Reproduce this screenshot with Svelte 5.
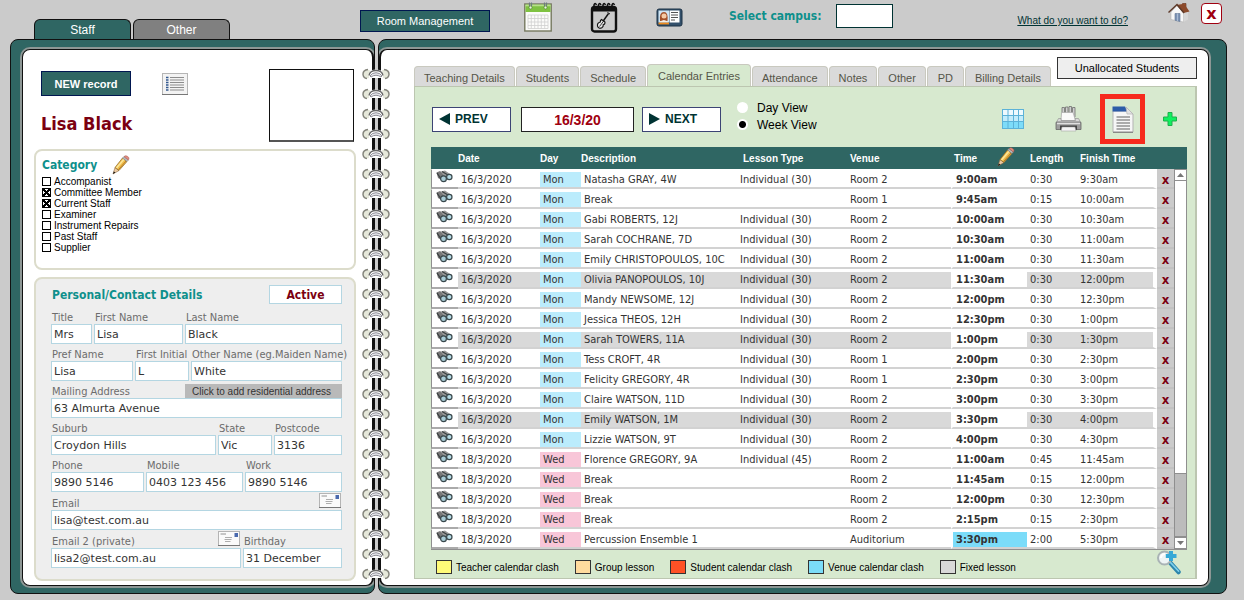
<script lang="ts">
    let view = 'week';
    let campus = '';

    let categories = [
        { name: 'Accompanist', on: false },
        { name: 'Committee Member', on: true },
        { name: 'Current Staff', on: true },
        { name: 'Examiner', on: false },
        { name: 'Instrument Repairs', on: false },
        { name: 'Past Staff', on: false },
        { name: 'Supplier', on: false }
    ];

    // size = share of the row each field takes
    let rows = [
        [{ label: 'Title', value: 'Mrs', size: 41 }, { label: 'First Name', value: 'Lisa', size: 89 }, { label: 'Last Name', value: 'Black', size: 157 }],
        [{ label: 'Pref Name', value: 'Lisa', size: 82 }, { label: 'First Initial', value: 'L', size: 54 }, { label: 'Other Name (eg.Maiden Name)', value: 'White', size: 151 }],
        [{ label: 'Mailing Address', value: '63 Almurta Avenue', size: 1, residential: true }],
        [{ label: 'Suburb', value: 'Croydon Hills', size: 165 }, { label: 'State', value: 'Vic', size: 54 }, { label: 'Postcode', value: '3136', size: 68 }],
        [{ label: 'Phone', value: '9890 5146', size: 93 }, { label: 'Mobile', value: '0403 123 456', size: 97 }, { label: 'Work', value: '9890 5146', size: 97 }],
        [{ label: 'Email', value: 'lisa@test.com.au', size: 1, mail: true }],
        [{ label: 'Email 2 (private)', value: 'lisa2@test.com.au', size: 190, mail: true }, { label: 'Birthday', value: '31 December', size: 99 }]
    ];

    let tabs = ['Teaching Details', 'Students', 'Schedule', 'Calendar Entries', 'Attendance', 'Notes', 'Other', 'PD', 'Billing Details'];
    let activeTab = 'Calendar Entries';

    const mon = '16/3/2020', wed = '18/3/2020';
    let entries = [
        [mon, 'Natasha GRAY, 4W', 'Individual (30)', 'Room 2', '9:00am', '0:30', '9:30am'],
        [mon, 'Break', '', 'Room 1', '9:45am', '0:15', '10:00am'],
        [mon, 'Gabi ROBERTS, 12J', 'Individual (30)', 'Room 2', '10:00am', '0:30', '10:30am'],
        [mon, 'Sarah COCHRANE, 7D', 'Individual (30)', 'Room 2', '10:30am', '0:30', '11:00am'],
        [mon, 'Emily CHRISTOPOULOS, 10C', 'Individual (30)', 'Room 2', '11:00am', '0:30', '11:30am'],
        [mon, 'Olivia PANOPOULOS, 10J', 'Individual (30)', 'Room 2', '11:30am', '0:30', '12:00pm', 'fixed'],
        [mon, 'Mandy NEWSOME, 12J', 'Individual (30)', 'Room 2', '12:00pm', '0:30', '12:30pm'],
        [mon, 'Jessica THEOS, 12H', 'Individual (30)', 'Room 2', '12:30pm', '0:30', '1:00pm'],
        [mon, 'Sarah TOWERS, 11A', 'Individual (30)', 'Room 2', '1:00pm', '0:30', '1:30pm', 'fixed'],
        [mon, 'Tess CROFT, 4R', 'Individual (30)', 'Room 1', '2:00pm', '0:30', '2:30pm'],
        [mon, 'Felicity GREGORY, 4R', 'Individual (30)', 'Room 1', '2:30pm', '0:30', '3:00pm'],
        [mon, 'Claire WATSON, 11D', 'Individual (30)', 'Room 2', '3:00pm', '0:30', '3:30pm'],
        [mon, 'Emily WATSON, 1M', 'Individual (30)', 'Room 2', '3:30pm', '0:30', '4:00pm', 'fixed'],
        [mon, 'Lizzie WATSON, 9T', 'Individual (30)', 'Room 2', '4:00pm', '0:30', '4:30pm'],
        [wed, 'Florence GREGORY, 9A', 'Individual (45)', 'Room 2', '11:00am', '0:45', '11:45am'],
        [wed, 'Break', '', 'Room 2', '11:45am', '0:15', '12:00pm'],
        [wed, 'Break', '', 'Room 2', '12:00pm', '0:30', '12:30pm'],
        [wed, 'Break', '', 'Room 2', '2:15pm', '0:15', '2:30pm'],
        [wed, 'Percussion Ensemble 1', '', 'Auditorium', '3:30pm', '2:00', '5:30pm', 'venue']
    ];

    let legend = [
        { name: 'Teacher calendar clash', color: '#fffb78' },
        { name: 'Group lesson', color: '#ffdb9e' },
        { name: 'Student calendar clash', color: '#ff5126' },
        { name: 'Venue calendar clash', color: '#7bdcf9' },
        { name: 'Fixed lesson', color: '#d9d9d9' }
    ];

    function removeEntry(entry) { entries = entries.filter(e => e !== entry); }
</script>

<svelte:head><title>Staff</title></svelte:head>

{#snippet pencil()}
    <svg width="18" height="20" viewBox="0 0 18 20" aria-hidden="true">
        <path d="M1 19 L3 12.500 L7 15.500 Z" fill="#ecc9a0" stroke="#8d6b44" stroke-width=".6" />
        <path d="M1 19 L1.800 16.400 L3.400 17.500 Z" fill="#111" />
        <path d="M3 12.500 L10.500 3 L15 6.500 L7 15.500 Z" fill="#f0bd4a" stroke="#8a6424" stroke-width=".7" />
        <path d="M4.500 13 L12 4.200" stroke="#fbe79c" stroke-width="1.500" />
        <path d="M6.400 14.800 L14 6" stroke="#b97e28" stroke-width="1" />
        <path d="M10.500 3 L12 1.600 L16.300 5 L15 6.500 Z" fill="#b9bdc2" stroke="#777" stroke-width=".5" />
        <path d="M12 1.600 Q13 .2 15 1 Q17.500 2.300 17 4 L16.300 5 Z" fill="#e3897d" stroke="#a35a50" stroke-width=".5" />
    </svg>
{/snippet}

<div class="app">
    <header>
        <nav class="main-tabs">
            <button class="current">Staff</button>
            <button>Other</button>
        </nav>
        <button class="dark room">Room Management</button>
        <div class="shortcuts">
            <button class="plain" aria-label="Calendar">
                <svg width="28" height="30" viewBox="0 0 28 30">
                    <rect x=".8" y="2" width="26.400" height="27" fill="#fcfcfa" stroke="#75785f" stroke-width="1.400" />
                    <rect x="1.500" y="2.500" width="25" height="7.500" fill="#7fc241" />
                    <path d="M1.500 3.500H26.500" stroke="#b7e08a" stroke-width="1.500" />
                    <path d="M4 13H24M4 16.500H24M4 20H24M4 23.500H24M4 26.500H24M4 13V26.500M7.300 13V26.500M10.700 13V26.500M14 13V26.500M17.300 13V26.500M20.700 13V26.500M24 13V26.500" stroke="#cfcfcf" stroke-width=".8" />
                    <path d="M5.500 .5V4.500M7.500 .5V4.500M20.500 .5V4.500M22.500 .5V4.500" stroke="#6e7c80" stroke-width="1.200" />
                    <circle cx="6.500" cy="5.500" r="1.500" fill="#e9f4e0" stroke="#4b7a2a" stroke-width=".6" />
                    <circle cx="21.500" cy="5.500" r="1.500" fill="#e9f4e0" stroke="#4b7a2a" stroke-width=".6" />
                </svg>
            </button>
            <button class="plain" aria-label="Instrument calendar">
                <svg width="28" height="31" viewBox="0 0 28 31">
                    <rect x="2" y="5" width="24" height="24.500" rx="2.500" fill="#cbcbcb" stroke="#111" stroke-width="2.400" />
                    <path d="M2 5H26V9.500H2Z" fill="#111" />
                    <path d="M4 7V3q1-3 2.500 0M8.500 7V3q1-3 2.500 0M13 7V3q1-3 2.500 0M17.500 7V3q1-3 2.500 0M22 7V3q1-3 2.500 0" fill="none" stroke="#111" stroke-width="1.600" />
                    <path d="M18.500 11.500 L12.500 20" stroke="#111" stroke-width="1.400" />
                    <path d="M17.500 10.500 l2.500 1.500" stroke="#111" />
                    <path d="M11.500 17.500 q-1.500 1 -1.200 2.500 q-3.300 .8 -2.800 4 q1 3.300 4.300 1.800 q1.800-1.200 1.400-3 q2-.5 1.800-2.800Z" fill="#e4e4e4" stroke="#111" stroke-width="1.100" />
                    <path d="M9.500 24.500 L14 18.500" stroke="#111" stroke-width=".8" />
                </svg>
            </button>
            <button class="plain" aria-label="Contacts">
                <svg width="27" height="19" viewBox="0 0 27 19">
                    <rect x="1" y="1" width="25" height="17" rx="2" fill="#33506b" stroke="#1d3247" />
                    <rect x="2.500" y="2.500" width="10.500" height="12" fill="#cfe6f5" />
                    <rect x="13.500" y="2.500" width="10" height="12" fill="#fff" />
                    <path d="M4 13 Q3 4 8 4 Q12.500 4 11.500 13Z" fill="#a4512a" />
                    <circle cx="8" cy="8" r="2.500" fill="#f5cba6" />
                    <path d="M3 14.500 Q8 9.500 12.500 14.500Z" fill="#f2efe9" />
                    <path d="M2.500 15.500H13" stroke="#f08b1d" stroke-width="1.800" />
                    <path d="M15 4.500H22M15 7H22M15 9.500H22M15 12H19" stroke="#555" />
                </svg>
            </button>
        </div>
        <label class="campus">Select campus:
            <select bind:value={campus}><option value=""></option></select>
        </label>
        <div class="right-tools">
            <a class="help" href="#help">What do you want to do?</a>
            <button class="plain" aria-label="Home">
                <svg width="22" height="21" viewBox="0 0 22 21">
                    <path d="M14.500 1.500h3.500v6h-3.500z" fill="#a4552f" stroke="#5e2d17" stroke-width=".6" />
                    <path d="M3 10 L9 3.500 L15.500 10 V20 L3 17.500Z" fill="#f7f7f7" stroke="#aaa" stroke-width=".5" />
                    <path d="M15.500 10 L20 9 V17.500 L15.500 20Z" fill="#d6d6d6" />
                    <path d="M8.500 3 L16 1.800 L21.500 9.500 L15.500 11Z" fill="#8b4a2b" />
                    <path d="M.5 10.500 L9 2.500 L16 11" fill="none" stroke="#5e3a2a" stroke-width="1.500" />
                    <path d="M7 11.500h5v8l-5-1.200z" fill="#7e94b5" stroke="#5f7392" stroke-width=".6" />
                    <path d="M9.500 11.500V19" stroke="#a9bbd4" />
                </svg>
            </button>
            <button class="close" aria-label="Close">x</button>
        </div>
    </header>

    <div class="book">
        <section class="page left">
            <div class="sheet">
                <div class="person">
                    <div class="person-info">
                        <div class="person-actions">
                            <button class="dark new">NEW record</button>
                            <button class="plain" aria-label="List view">
                                <svg width="26" height="22" viewBox="0 0 26 22">
                                    <rect x=".5" y=".5" width="25" height="21" fill="#f3f3f3" stroke="#b5b5b5" />
                                    <path d="M0 21.500H26" stroke="#777" />
                                    <path d="M8 4.500H22M8 7H22M8 9.500H22M8 12H22M8 14.500H22M8 17H22" stroke="#8d8d8d" stroke-width="1.200" />
                                    <path d="M4 4.500H6.500M4 7H6.500M4 9.500H6.500M4 12H6.500M4 14.500H6.500M4 17H6.500" stroke="#33588e" stroke-width="1.600" />
                                </svg>
                            </button>
                        </div>
                        <h1>Lisa Black</h1>
                    </div>
                    <div class="photo"></div>
                </div>

                <div class="panel category">
                    <h2>Category {@render pencil()}</h2>
                    {#each categories as category}
                        <label><input type="checkbox" bind:checked={category.on}>{category.name}</label>
                    {/each}
                </div>

                <form class="panel details">
                    <div class="details-head">
                        <h2>Personal/Contact Details</h2>
                        <button type="button" class="status">Active</button>
                    </div>
                    {#each rows as row, r}
                        <div class="fields">
                            {#each row as field, f}
                                <div class="field" style="flex-grow: {field.size}">
                                    <div class="field-head" class:tall={r > 4}>
                                        <label for="field-{r}-{f}">{field.label}</label>
                                        {#if field.residential}
                                            <button type="button" class="residential">Click to add residential address</button>
                                        {/if}
                                        {#if field.mail}
                                            <button type="button" class="plain" aria-label="Send email">
                                                <svg width="22" height="15" viewBox="0 0 22 15">
                                                    <rect x=".5" y=".5" width="21" height="14" fill="#fafafa" stroke="#b4b4b4" />
                                                    <path d="M0 14.500H22" stroke="#777" />
                                                    <path d="M2.500 3H8" stroke="#777" stroke-width=".8" />
                                                    <path d="M7 6.500H14M6.500 8.500H13.500M7 10.500H12.500" stroke="#999" stroke-width=".8" />
                                                    <rect x="16.500" y="2" width="3.500" height="4" fill="#4a69ad" />
                                                </svg>
                                            </button>
                                        {/if}
                                    </div>
                                    <input id="field-{r}-{f}" type="text" bind:value={field.value}>
                                </div>
                            {/each}
                        </div>
                    {/each}
                </form>
            </div>
        </section>

        <section class="page right">
            <div class="sheet">
                <div class="tab-row">
                    <nav class="tabs">
                        {#each tabs as tab}
                            <button class:active={tab === activeTab} on:click={() => activeTab = tab}>{tab}</button>
                        {/each}
                    </nav>
                    <button class="unallocated">Unallocated Students</button>
                </div>

                <div class="calendar">
                    <div class="toolbar">
                        <button class="step">
                            <svg width="11" height="12" viewBox="0 0 11 12"><path d="M0 6 L11 0 V12Z" fill="#033" /></svg>PREV
                        </button>
                        <input class="date" type="text" value="16/3/20" aria-label="Date">
                        <button class="step">
                            <svg width="11" height="12" viewBox="0 0 11 12"><path d="M11 6 L0 0 V12Z" fill="#033" /></svg>NEXT
                        </button>
                        <div class="views">
                            <label><input type="radio" value="day" bind:group={view}>Day View</label>
                            <label><input type="radio" value="week" bind:group={view}>Week View</label>
                        </div>
                        <div class="tools">
                            <button class="plain" aria-label="Grid">
                                <svg width="22" height="20" viewBox="0 0 22 20">
                                    <rect width="22" height="20" fill="#5cb2d8" />
                                    <path d="M1 1h4.500v5H1zM6.500 1h4.500v5H6.500zM12 1h4v5h-4zM17 1h4v5h-4z" fill="#eef9fe" />
                                    <path d="M1 7h4.500v5H1zM6.500 7h4.500v5H6.500zM12 7h4v5h-4zM17 7h4v5h-4z" fill="#c3ecfb" />
                                    <path d="M1 13h4.500v6H1zM6.500 13h4.500v6H6.500zM12 13h4v6h-4zM17 13h4v6h-4z" fill="#7ddcf9" />
                                </svg>
                            </button>
                            <button class="plain" aria-label="Print">
                                <svg width="27" height="26" viewBox="0 0 27 26">
                                    <path d="M7 1.500H9.500V11H7ZM10.500 1H13V11H10.500ZM14 .5H16.500V11H14ZM17.500 1.500H20V11H17.500Z" fill="#cfcfcf" stroke="#6e6e6e" stroke-width=".8" />
                                    <path d="M6.500 6.500H18L20.500 14.500H6Z" fill="#fafafa" stroke="#aaa" stroke-width=".7" />
                                    <path d="M3.500 12.500H6V14.500H20.500L20 12.500H23.500L26 17H1Z" fill="#d8d8d8" stroke="#8a8a8a" stroke-width=".6" />
                                    <path d="M1 17 Q1 16 2 16H25 Q26 16 26 17V23.500H1Z" fill="#9d9d9d" stroke="#666" stroke-width=".8" />
                                    <path d="M2 17.500H25" stroke="#e0e0e0" stroke-width="1.400" />
                                    <path d="M5 19.500H22V24H5Z" fill="#444" />
                                    <path d="M7 21H20L21 25H6Z" fill="#f4f4f4" stroke="#999" stroke-width=".5" />
                                </svg>
                            </button>
                            <button class="plain report" aria-label="Report">
                                <svg width="22" height="27" viewBox="0 0 22 27">
                                    <path d="M1 5 V26 H21 V8 L14.500 1.500 V5Z" fill="#f6f6f6" stroke="#b3b3b3" />
                                    <path d="M.5 .5H13 L15.500 5.500H.5Z" fill="#2c5ba8" />
                                    <path d="M14 1 L21 8H15Z" fill="#e3e3e3" stroke="#b3b3b3" stroke-width=".7" />
                                    <path d="M4.500 11H18M4.500 14H18M4.500 17H18M4.500 20H18M4.500 23H18" stroke="#929292" stroke-width="1.400" />
                                    <path d="M1 26.300H21" stroke="#777" />
                                </svg>
                            </button>
                            <button class="plain" aria-label="Add entry">
                                <svg width="14" height="14" viewBox="0 0 14 14"><path d="M5 .5H9V5H13.500V9H9V13.500H5V9H.5V5H5Z" fill="#10f05f" stroke="#1fae4d" /></svg>
                            </button>
                        </div>
                    </div>

                    <div class="grid">
                        <table>
                            <colgroup>
                                <col class="c-icon"><col class="c-date"><col class="c-day"><col><col class="c-type">
                                <col class="c-venue"><col class="c-time"><col class="c-length"><col class="c-finish"><col class="c-remove">
                            </colgroup>
                            <thead>
                                <tr>
                                    <th></th><th class="flush">Date</th><th class="flush">Day</th><th class="flush">Description</th><th class="wide">Lesson Type</th>
                                    <th>Venue</th><th class="time-head">Time<span class="edit">{@render pencil()}</span></th><th>Length</th><th>Finish Time</th><th></th>
                                </tr>
                            </thead>
                            <tbody>
                                {#each entries as entry}
                                    <tr class={entry[7]}>
                                        <td class="look">
                                            <button class="plain" aria-label="View entry">
                                                <svg width="17" height="13" viewBox="0 0 17 13">
                                                    <path d="M.5 2.500 L4 1 L9 5 L5.500 10 L2 8Z" fill="#777" />
                                                    <path d="M5 1.500 L9 .5 L15.500 5 L14 9 L9 8Z" fill="#999" />
                                                    <path d="M1 3 L5 9M6 1.500 L12 5" stroke="#3c4242" stroke-width="1.300" />
                                                    <circle cx="7.500" cy="8.800" r="2.900" fill="#a8ccd6" stroke="#39474b" stroke-width="1.200" />
                                                    <circle cx="13.300" cy="7" r="2.700" fill="#b7dce6" stroke="#39474b" stroke-width="1.200" />
                                                </svg>
                                            </button>
                                        </td>
                                        <td>{entry[0]}</td>
                                        <td class={entry[0] === mon ? 'mon' : 'wed'}>{entry[0] === mon ? 'Mon' : 'Wed'}</td>
                                        <td>{entry[1]}</td>
                                        <td>{entry[2]}</td>
                                        <td>{entry[3]}</td>
                                        <td class="time">{entry[4]}</td>
                                        <td>{entry[5]}</td>
                                        <td class="finish">{entry[6]}</td>
                                        <td class="remove"><button aria-label="Remove entry" on:click={() => removeEntry(entry)}>x</button></td>
                                    </tr>
                                {/each}
                            </tbody>
                        </table>
                        <div class="scrollbar">
                            <button aria-label="Scroll up"><svg width="7" height="4" viewBox="0 0 7 4"><path d="M0 4 L3.500 0 L7 4Z" fill="#777" /></svg></button>
                            <div class="track"></div>
                            <div class="thumb"></div>
                            <button aria-label="Scroll down"><svg width="7" height="4" viewBox="0 0 7 4"><path d="M0 0H7L3.500 4Z" fill="#777" /></svg></button>
                        </div>
                    </div>

                    <div class="legend">
                        {#each legend as item}
                            <span class="key"><i style="background: {item.color}"></i>{item.name}</span>
                        {/each}
                        <button class="plain search" aria-label="Zoom">
                            <svg width="26" height="25" viewBox="0 0 26 25">
                                <path d="M14 12.500 L22.500 22" stroke="#2c86ac" stroke-width="4.500" stroke-linecap="round" />
                                <path d="M14.500 12.500 L22.500 21" stroke="#7fd0ec" stroke-width="1.800" stroke-linecap="round" />
                                <circle cx="8.500" cy="8" r="6.500" fill="#eef4f5" stroke="#a9b3b5" stroke-width="2" />
                                <path d="M5 8 Q5 4.500 9 4" fill="none" stroke="#fff" stroke-width="2" />
                                <path d="M13 1h4v3h3.500v4H17v3h-4V8H9.800V4H13z" fill="#36a9d6" />
                            </svg>
                        </button>
                    </div>
                </div>
            </div>
        </section>

        <div class="rings" aria-hidden="true">
            {#each Array(26) as _}
                <svg width="28" height="20" viewBox="0 0 28 20">
                    <circle cx="5.500" cy="10" r="4.200" fill="#e6e8da" />
                    <circle cx="22.500" cy="10" r="4.200" fill="#e6e8da" />
                    <path d="M6 5.500 Q1 6 1 10.200 Q1.300 14 5 14.500M22 5.500 Q27 6 27 10.200 Q26.700 14 23 14.500" fill="none" stroke="#85857c" stroke-width="1.500" />
                    <path d="M7 14 Q5 5.500 14 5.500 Q23 5.500 21 14Z" fill="#fff" />
                    <path d="M7 11.500 Q8 6.500 14 6.500 Q20 6.500 21 11.500" fill="none" stroke="#666" stroke-width="1.300" />
                    <path d="M8 12 Q10 8.700 14 8.700 Q18 8.700 20 12 L19 13 Q14 9.500 9 13Z" fill="#e4e4ea" stroke="#777780" stroke-width=".8" />
                </svg>
            {/each}
        </div>
    </div>
</div>


<style>

    :global(body){background: #cbcbcb;}

    .app{
        padding: 0 17px 7px 10px;
        font-family: "Liberation Sans", Arial, sans-serif;
        font-size: 11px;
        color: #222;
    }
    .app, .app *{box-sizing: border-box;}
    h1, h2{margin: 0; font-family: "DejaVu Sans Condensed", "DejaVu Sans", sans-serif;}
    h1{font-size: 18px; line-height: 20px; color: #7b0010;}
    h2{font-size: 12px; line-height: 16px; color: #0e908c;}
    button, input, select{font-family: inherit; font-size: inherit; margin: 0; cursor: pointer;}
    input[type="text"]{cursor: text;}
    svg{display: block; flex: none;}

    .plain{padding: 0; border: none; background: none;}
    .dark{color: #fff; background: #2f6663; border: 1px solid #001650;}


    /* top bar */
    header{display: flex; align-items: flex-start; height: 39px;}
    .main-tabs{display: flex; align-self: flex-end; gap: 2px; margin-left: 24px;}
    .main-tabs button{
        width: 97px; height: 20px; padding: 0;
        font-size: 12px;
        color: #fff;
        background: #808080;
        border: 1px solid #111; border-bottom: none;
        border-radius: 6px 6px 0 0;
    }
    .main-tabs button.current{background: #2f6663;}
    .room{width: 130px; height: 22px; margin: 10px 0 0 130px; padding: 0;}
    .shortcuts{display: flex; align-items: center; gap: 38px; height: 32px; margin: 1px 0 0 34px;}
    .campus{
        display: flex; align-items: center; gap: 14px;
        margin: 4px 0 0 46px;
        font: bold 12px "DejaVu Sans Condensed", "DejaVu Sans", sans-serif;
        color: #0e908c;
    }
    .campus select{width: 57px; height: 24px; appearance: none; background: #fff; border: 1px solid #033; border-radius: 0;}
    .right-tools{display: flex; align-items: flex-start; margin: 2px 5px 0 auto;}
    .help{margin: 13px 40px 0 0; font-size: 10px; line-height: 12px; color: #033;}
    .close{
        width: 21px; height: 21px; margin: 1px 0 0 11px; padding: 0;
        font: bold 16px/14px "DejaVu Sans", sans-serif;
        color: #a00010;
        background: #fff;
        border: 1px solid #a00010;
        border-radius: 4px;
    }


    /* open book */
    .book{position: relative; display: grid; grid-template-columns: 365px minmax(0, 1fr); gap: 3px;}
    .page{
        display: flex;
        overflow: hidden;
        background: #2f6663;
        border: 1px solid #111;
        border-radius: 8px;
    }
    .left{padding: 9px 0 7px 11px;}
    .right{padding: 9px 17px 7px 0;}
    .sheet{
        flex: 1; min-width: 0;
        background: #fff;
        border: 1px solid #111;
        border-radius: 8px;
        box-shadow: 0 0 0 2px #8d9795;
    }
    .left .sheet{padding: 19px 16px 4px 11px; border-right-width: 2px;}
    .right .sheet{padding: 7px 11px 5px 33px; border-left-width: 2px;}
    .rings{position: absolute; top: 25px; left: 352px;}


    /* person */
    .person{display: flex; justify-content: space-between; padding: 0 2px 0 7px;}
    .person-actions{display: flex; align-items: center; gap: 31px; padding-top: 2px;}
    .new{width: 90px; height: 25px; padding: 0; font-weight: bold;}
    h1{margin-top: 18px;}
    .photo{width: 85px; height: 73px; border: 1px solid #111; border-bottom: 2px solid #555;}

    .panel{border: 2px solid #dcdccb; border-radius: 8px;}
    .category{display: flex; flex-direction: column; margin-top: 7px; min-height: 121px; padding: 2px 6px;}
    .category h2{display: flex; align-items: center; gap: 15px; height: 23px;}
    .category label{display: flex; align-items: center; gap: 3px; width: fit-content; font-size: 10px; line-height: 11px; color: #000;}
    input[type="checkbox"]{width: 9px; height: 9px; appearance: none; border: 1px solid #000; background: #fff;}
    input[type="checkbox"]:checked{
        background:
            linear-gradient(45deg, transparent 42%, #000 42%, #000 58%, transparent 58%),
            linear-gradient(-45deg, transparent 42%, #000 42%, #000 58%, transparent 58%);
    }

    .details{
        margin-top: 7px;
        padding: 6px 12px 11px 15px;
        background: #eee;
        font-family: "DejaVu Sans", sans-serif;
    }
    .details-head{display: flex; justify-content: space-between; align-items: center; height: 19px; margin-bottom: 3px; padding-left: 1px;}
    .status{
        width: 73px; height: 19px; padding: 0;
        font: bold 12px "DejaVu Sans Condensed", "DejaVu Sans", sans-serif;
        color: #7b0010;
        background: #fff;
        border: 1px solid #b4d6e2;
    }
    .fields{display: flex; gap: 2px;}
    .field{flex: 1 1 0; min-width: 0;}
    .field-head{display: flex; justify-content: space-between; align-items: flex-end; height: 17px;}
    .field-head.tall{height: 18px;}
    .field-head label{
        padding-left: 1px;
        font-family: "DejaVu Sans Condensed", "DejaVu Sans", sans-serif;
        line-height: 13px;
        white-space: nowrap;
        color: #6c6c6c;
    }
    .field-head .plain{margin: 0 1px 2px 0;}
    .field input{
        display: block;
        width: 100%; height: 20px; padding: 1px 2px 0;
        color: #333;
        background: #fff;
        border: 1px solid #b4d6e2;
        border-radius: 0;
    }
    .residential{
        height: 14px; padding: 0 11px 0 7px;
        font: 10px "Liberation Sans", Arial, sans-serif;
        white-space: nowrap;
        color: #333;
        background: #b9b9b9;
        border: none;
    }


    /* tabs */
    .tab-row{display: flex; justify-content: space-between; align-items: flex-end; height: 29px;}
    .tabs{display: flex; align-items: flex-end; gap: 1px;}
    .tabs button{
        min-width: 37px; height: 20px; padding: 3px 9px 0;
        white-space: nowrap;
        color: #555548;
        background: #dadada;
        border: 1px solid #c9c9bf; border-bottom: none;
        border-radius: 4px 4px 0 0;
    }
    .tabs button.active{height: 22px; padding: 1px 10px 0; background: #d7e9cf;}
    .unallocated{
        align-self: flex-start;
        width: 140px; height: 22px; padding: 0;
        color: #000;
        background: #eee;
        border: 1px solid #333;
    }

    .calendar{
        padding: 0 8px 0 16px;
        background: #d7e9cf;
        border: 1px solid #bcc6b0; border-right-width: 2px;
    }
    .toolbar{display: flex; align-items: center; height: 60px; padding: 4px 10px 0 1px;}
    .step{
        display: flex; align-items: center; gap: 5px;
        width: 79px; height: 25px; padding: 0 6px;
        font-size: 12px; font-weight: bold;
        color: #033;
        background: #fff;
        border: 1px solid #3c4474;
    }
    .date{
        width: 113px; height: 25px; margin: 0 8px 0 10px; padding: 2px 0 0;
        font-size: 14px; font-weight: bold;
        text-align: center;
        color: #a00010;
        background: #fff;
        border: 1px solid #222;
        border-radius: 0;
    }
    .views{margin: 0 0 6px 16px; font-size: 12px; color: #000;}
    .views label{display: flex; align-items: center; gap: 9px; height: 17px;}
    input[type="radio"]{width: 11px; height: 11px; appearance: none; background: #fff; border-radius: 50%;}
    input[type="radio"]:checked{background: radial-gradient(circle, #000 3px, #fff 4px);}
    .tools{display: flex; align-items: center; gap: 18px; height: 50px; margin-left: auto;}
    .tools .plain:first-child{margin-right: 13px;}
    .report{display: flex; align-items: center; justify-content: center; width: 45px; height: 50px; border: 5px solid #f62a1d;}


    /* entries */
    .grid{display: flex; background: #2f6663; border-bottom: 1px solid #8f8f8f;}
    table{
        flex: 1; min-width: 0;
        table-layout: fixed;
        border-spacing: 0;
        font-family: "DejaVu Sans Condensed", "DejaVu Sans", sans-serif;
    }
    .c-icon{width: 27px;}
    .c-date{width: 82px;}
    .c-day{width: 41px;}
    .c-type{width: 110px;}
    .c-venue{width: 104px;}
    .c-time{width: 76px;}
    .c-length{width: 50px;}
    .c-finish{width: 80px;}
    .c-remove{width: 17px;}
    th{
        height: 22px; padding: 1px 0 0 3px;
        font: bold 10px "Liberation Sans", Arial, sans-serif;
        text-align: left;
        color: #fff;
    }
    th.flush{padding-left: 0;}
    th.wide{padding-left: 6px;}
    .time-head{position: relative;}
    .edit{position: absolute; top: 0; left: 46px;}
    td{
        height: 20px; padding: 0 0 0 3px;
        line-height: 15px;
        white-space: nowrap;
        color: #333;
        background: #fff;
        border-top: 3px solid #fff;
        border-bottom: 2px solid #d2d2d2;
    }
    .look{padding-left: 4px; border-left: 1px solid #8f8f8f; border-top-width: 1px; border-bottom-color: #aaa; vertical-align: top;}
    .look .plain{display: block;}
    .time{border-left: 2px solid #fff; font: bold 11px/15px "DejaVu Sans Condensed", "DejaVu Sans", sans-serif;}
    .finish{border-right: 4px solid #fff;}
    .fixed td:not(.look, .time, .remove){background: #d9d9d9;}
    .venue .time{background: #7bdcf9;}
    tr .mon, .fixed td.mon:not(.look, .time, .remove){background: #bbecfc;}
    tr .wed{background: #f8c6d8;}
    td.remove{padding: 0; text-align: center; background: #cbcbcb; border-top-color: #cbcbcb; border-bottom-color: #c2c2c2;}
    .remove button{
        display: block;
        width: 100%; padding: 0;
        font: bold 13px/15px "DejaVu Sans Condensed", "DejaVu Sans", sans-serif;
        color: #7b0010;
        background: none;
        border: none;
    }

    .scrollbar{display: flex; flex-direction: column; width: 13px; padding-top: 22px;}
    .scrollbar button{
        display: flex; align-items: center; justify-content: center;
        width: 13px; height: 12px; padding: 0;
        background: #fff;
        border: 1px solid #8f8f8f;
    }
    .track{flex: 294; background: #fff; border: solid #8f8f8f; border-width: 0 1px;}
    .thumb{flex: 62; background: #bcbcbc; border: 1px solid #8f8f8f;}

    .legend{display: flex; align-items: center; gap: 16px; height: 28px; padding: 6px 5px 0; font-size: 10px; color: #000;}
    .key{display: flex; align-items: center; gap: 4px; white-space: nowrap;}
    .key i{width: 16px; height: 14px; border: 1px solid #333;}
    .search{margin: -10px 0 0 auto;}

</style>
